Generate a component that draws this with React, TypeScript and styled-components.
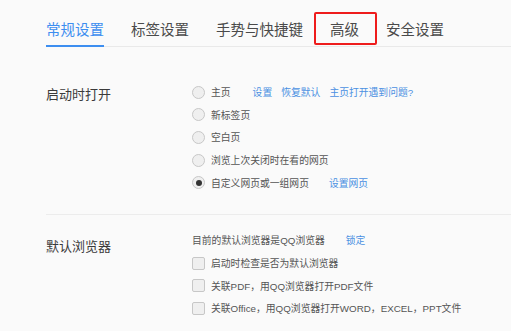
import React from "react";
import styled, { createGlobalStyle } from "styled-components";

const Global = createGlobalStyle`
  html, body { margin: 0; padding: 0; background: #fafafa; }
  body { font-family: "Noto Sans CJK SC", "Noto Sans", sans-serif; }
`;

const Page = styled.div`
  width: 511px;
  height: 331px;
  overflow: hidden;
  background: #fafafa;
  padding-left: 46px;
  box-sizing: border-box;
`;

const TabBar = styled.div`
  display: flex;
  gap: 27px;
  padding-top: 12px;
  border-bottom: 1px solid #e9e9e9;
`;

const Tab = styled.div<{ $active?: boolean; $marked?: boolean }>`
  position: relative;
  height: 35px;
  line-height: 34px;
  font-size: 14.5px;
  color: ${(p) => (p.$active ? "#3d8ef0" : "#4a4a4a")};
  margin-bottom: -1px;
  box-sizing: border-box;
  border-bottom: 2px solid ${(p) => (p.$active ? "#3d8ef0" : "transparent")};
  white-space: nowrap;
  &::after {
    content: "";
    display: ${(p) => (p.$marked ? "block" : "none")};
    position: absolute;
    left: -16px;
    right: -18px;
    top: 0;
    bottom: 0;
    border: 2px solid #ee1c1c;
    border-radius: 2px;
  }
`;

const Section = styled.div<{ $top: number; $bottom: number; $divider?: boolean }>`
  display: grid;
  grid-template-columns: 146px 1fr;
  padding-top: ${(p) => p.$top}px;
  padding-bottom: ${(p) => p.$bottom}px;
  border-bottom: ${(p) => (p.$divider ? "1px solid #ececec" : "none")};
`;

const Title = styled.div<{ $offset: number }>`
  font-size: 13px;
  line-height: 26px;
  color: #3a3a3a;
  padding-top: ${(p) => p.$offset}px;
`;

const Options = styled.div`
  display: flex;
  flex-direction: column;
`;

const Row = styled.div<{ $h?: number }>`
  display: flex;
  align-items: center;
  height: ${(p) => p.$h ?? 22.6}px;
  font-family: "Liberation Sans", "Noto Sans CJK SC", sans-serif;
  font-size: 9.8px;
  color: #555;
  white-space: nowrap;
`;

const Radio = styled.span<{ $checked?: boolean }>`
  width: 13px;
  height: 13px;
  box-sizing: border-box;
  border-radius: 50%;
  border: 1px solid #c7c7c7;
  background: #efefef;
  display: inline-flex;
  align-items: center;
  justify-content: center;
  margin-right: 6px;
  flex: none;
  &::after {
    content: "";
    display: ${(p) => (p.$checked ? "block" : "none")};
    width: 6px;
    height: 6px;
    border-radius: 50%;
    background: #333;
  }
`;

const Check = styled.span`
  width: 13px;
  height: 13px;
  box-sizing: border-box;
  border-radius: 2px;
  border: 1px solid #c7c7c7;
  background: #efefef;
  margin-right: 6px;
  flex: none;
`;

const Links = styled.span<{ $ml: number }>`
  display: inline-flex;
  gap: 9px;
  margin-left: ${(p) => p.$ml}px;
`;

const Link = styled.span`
  color: #4a90e2;
`;

export default function App() {
  return (
    <Page>
      <Global />
      <TabBar>
        <Tab $active>常规设置</Tab>
        <Tab>标签设置</Tab>
        <Tab>手势与快捷键</Tab>
        <Tab $marked>高级</Tab>
        <Tab>安全设置</Tab>
      </TabBar>
      <Section $top={34} $bottom={20} $divider>
        <Title $offset={0}>启动时打开</Title>
        <Options>
          <Row>
            <Radio />
            主页
            <Links $ml={22}>
              <Link>设置</Link>
              <Link>恢复默认</Link>
              <Link>主页打开遇到问题?</Link>
            </Links>
          </Row>
          <Row>
            <Radio />
            新标签页
          </Row>
          <Row>
            <Radio />
            空白页
          </Row>
          <Row>
            <Radio />
            浏览上次关闭时在看的网页
          </Row>
          <Row>
            <Radio $checked />
            自定义网页或一组网页
            <Links $ml={20}>
              <Link>设置网页</Link>
            </Links>
          </Row>
        </Options>
      </Section>
      <Section $top={13} $bottom={0}>
        <Title $offset={5}>默认浏览器</Title>
        <Options>
          <Row $h={24}>
            目前的默认浏览器是QQ浏览器
            <Links $ml={21}>
              <Link>锁定</Link>
            </Links>
          </Row>
          <Row>
            <Check />
            启动时检查是否为默认浏览器
          </Row>
          <Row>
            <Check />
            关联PDF，用QQ浏览器打开PDF文件
          </Row>
          <Row>
            <Check />
            关联Office，用QQ浏览器打开WORD，EXCEL，PPT文件
          </Row>
        </Options>
      </Section>
    </Page>
  );
}
